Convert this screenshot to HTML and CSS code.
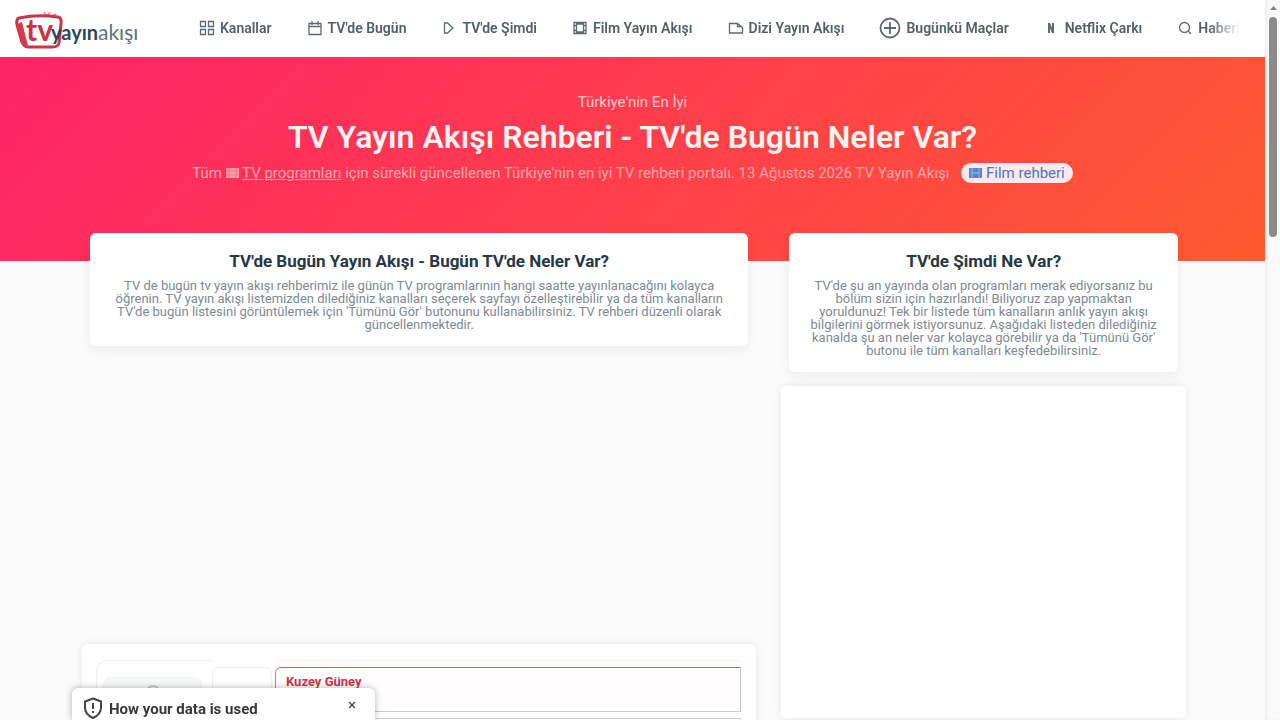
FILE: index.html
```html
<!DOCTYPE html>
<html lang="tr">
<head>
    <meta charset="utf-8">
    <title>TV Yayın Akışı Rehberi - TV'de Bugün Neler Var?</title>
    <link rel="stylesheet" href="styles.css">
</head>
<body>
    <div class="page">
        <header class="header">
            <a class="logo" href="#">
                <svg width="128" height="44" viewBox="0 0 128 44">
                    <path d="M32 9l4-6M34 9l8-4M33 8l-3-5" stroke="#e58a92" stroke-width="1.5" fill="none"/>
                    <path d="M5 9Q24 5 44 8Q48 9 47 15L45 34Q44 38 39 38H14Q10 38 8 33L3 16Q2 10 5 9Z" fill="#fff" stroke="#cc3345" stroke-width="3"/>
                    <path d="M3 15l5-2 6 24h-3q-4-1-5-6z" fill="#d93a4b"/>
                    <text x="12" y="32" class="logo-tv">tv</text>
                    <text x="37" y="31" class="logo-dark">yayın</text>
                    <text x="84" y="31" class="logo-gray">akışı</text>
                </svg>
            </a>
            <nav class="nav">
                <a href="#"><svg width="16" height="16" viewBox="0 0 16 16"><path d="M1.500 1.500h5v5h-5zM9.500 1.500h5v5h-5zM1.500 9.500h5v5h-5zM9.500 9.500h5v5h-5z"/></svg>Kanallar</a>
                <a href="#"><svg width="16" height="16" viewBox="0 0 16 16"><path d="M2 3.500h12v11H2zM2 6.500h12M5 1v4M11 1v4"/></svg>TV'de Bugün</a>
                <a href="#"><svg width="16" height="16" viewBox="0 0 16 16"><path d="M3.500 3v10h3l5.500-5-5.500-5z"/></svg>TV'de Şimdi</a>
                <a href="#"><svg width="16" height="16" viewBox="0 0 16 16"><path d="M2 2.500h12v11H2zM4.500 2.500v11M11.500 2.500v11M2 5.500h2.500M2 10.500h2.500M11.500 5.500H14M11.500 10.500H14M4.500 4h7M4.500 12h7"/></svg>Film Yayın Akışı</a>
                <a href="#"><svg width="16" height="16" viewBox="0 0 16 16"><path d="M1.500 3.500h8l5 4v5.500h-13zM9.500 3.500v3h4"/></svg>Dizi Yayın Akışı</a>
                <a href="#"><svg class="big" width="22" height="22" viewBox="0 0 22 22"><circle cx="11" cy="11" r="9.500"/><path d="M11 5v12M5 11h12"/></svg>Bugünkü Maçlar</a>
                <a href="#"><svg width="16" height="16" viewBox="0 0 16 16"><path class="thick" d="M5 3v10M5 3l4 10M9 3v10"/></svg>Netflix Çarkı</a>
                <a href="#"><svg width="16" height="16" viewBox="0 0 16 16"><circle cx="7.500" cy="7.500" r="5"/><path d="M11 11l3 3"/></svg>Haberler</a>
            </nav>
        </header>

        <section class="hero">
            <p class="hero-top">Türkiye'nin En İyi</p>
            <h1>TV Yayın Akışı Rehberi - TV'de Bugün Neler Var?</h1>
            <p class="hero-text">Tüm <svg width="13" height="12" viewBox="0 0 13 12"><path d="M0 1h13v10H0z" fill="#ff9da6"/><path d="M3 1v10M10 1v10M0 4h13M0 8h13" stroke="#ff7583"/></svg> <a href="#">TV programları</a> için sürekli güncellenen Türkiye'nin en iyi TV rehberi portalı. 13 Ağustos 2026 TV Yayın Akışı <a class="pill" href="#"><svg width="13" height="12" viewBox="0 0 13 12"><path d="M0 1h13v10H0z" fill="#5685d2"/><path d="M3 1v10M10 1v10M3 6h7" stroke="#9bb9e8"/></svg> Film rehberi</a></p>
        </section>

        <main class="columns">
            <div class="col-main">
                <div class="card">
                    <h2>TV'de Bugün Yayın Akışı - Bugün TV'de Neler Var?</h2>
                    <p>TV de bugün tv yayın akışı rehberimiz ile günün TV programlarının hangi saatte yayınlanacağını kolayca öğrenin. TV yayın akışı listemizden dilediğiniz kanalları seçerek sayfayı özelleştirebilir ya da tüm kanalların TV'de bugün listesini görüntülemek için 'Tümünü Gör' butonunu kullanabilirsiniz. TV rehberi düzenli olarak güncellenmektedir.</p>
                </div>
                <div class="ad-space"></div>
                <div class="panel schedule">
                    <div class="channel"><div class="channel-logo"><svg width="16" height="8" viewBox="0 0 16 8"><path d="M3 4q5-4 10 0" fill="none" stroke="#c9cdcf" stroke-width="2"/></svg></div></div>
                    <div class="time"></div>
                    <div class="programs">
                        <div class="program">Kuzey Güney</div>
                        <div class="program next"></div>
                    </div>
                </div>
            </div>
            <aside class="col-side">
                <div class="card">
                    <h2>TV'de Şimdi Ne Var?</h2>
                    <p>TV'de şu an yayında olan programları merak ediyorsanız bu bölüm sizin için hazırlandı! Biliyoruz zap yapmaktan yoruldunuz! Tek bir listede tüm kanalların anlık yayın akışı bilgilerini görmek istiyorsunuz. Aşağıdaki listeden dilediğiniz kanalda şu an neler var kolayca görebilir ya da 'Tümünü Gör' butonu ile tüm kanalları keşfedebilirsiniz.</p>
                </div>
                <div class="panel now"></div>
            </aside>
        </main>
    </div>

    <div class="scrollbar">
        <svg width="9" height="6" viewBox="0 0 9 6"><path d="M4.500 1L8 5H1z" fill="#858585"/></svg>
        <div class="thumb"></div>
    </div>

    <div class="consent">
        <svg width="20" height="22" viewBox="0 0 20 22"><path d="M10 1.500l8 3v6q0 7-8 10.500Q2 17.500 2 10.500v-6z" fill="none" stroke="#444" stroke-width="2"/><path d="M10 6v6M10 14v2" stroke="#444" stroke-width="2"/></svg>
        <strong>How your data is used</strong>
        <button type="button" aria-label="Close"><svg width="8" height="8" viewBox="0 0 8 8"><path d="M1 1l6 6M7 1L1 7" stroke="#444" stroke-width="1.300"/></svg></button>
    </div>
</body>
</html>
```
FILE: styles.css
```css
* { box-sizing: border-box; }
body { display: flex; height: 100vh; margin: 0; overflow: hidden; background: #fafafa; font-family: Roboto, sans-serif; color: #263843; }
h1, h2, p { margin: 0; }
.page { flex: 1; min-width: 0; height: 100vh; overflow: hidden; }

.header { display: flex; align-items: center; height: 57px; padding: 0 25px 1px 14px; background: #fff; }
.logo { flex: none; width: 185px; padding-top: 6px; }
.logo svg { display: block; }
.logo-tv { font: bold 30px Lato, sans-serif; fill: #c93445; }
.logo-dark { font: bold 20px Lato, sans-serif; fill: #29485a; }
.logo-gray { font: 21px Lato, sans-serif; fill: #65727b; }
.nav { display: flex; flex: 1; gap: 35px; min-width: 0; overflow: hidden; mask-image: linear-gradient(to right, #000 97%, transparent); }
.nav a { display: flex; flex: none; align-items: center; gap: 5px; font-size: 14px; font-weight: 600; color: #52606a; text-decoration: none; white-space: nowrap; }
.nav svg { fill: none; stroke: #5d6a73; stroke-width: 1.3; }
.nav .big { stroke-width: 1.8; }
.nav .thick { stroke-width: 2; }

.hero { height: 204px; padding-top: 34px; background: linear-gradient(135deg, #ff2268, #ff5a30); color: #fff; text-align: center; }
.hero-top { font-size: 15px; line-height: 22px; color: #ffc9cc; }
.hero h1 { font-size: 32px; font-weight: 600; line-height: 48px; color: #fff3ef; }
.hero-text { font-size: 15px; line-height: 24px; color: #ffa6ab; }
.hero-text a { color: inherit; }
.hero-text svg { vertical-align: -1px; }
.hero-text .pill { display: inline-block; margin-left: 8px; padding: 0 8px; border-radius: 10px; background: #fbe9ee; color: #4a76c0; line-height: 20px; text-decoration: none; }

.columns { display: flex; gap: 25px; align-items: flex-start; margin: -28px 79px 0 82px; }
.col-main { flex: 5; min-width: 0; }
.col-side { flex: 3; min-width: 0; }
.card { margin: 0 8px; padding: 16px 16px 15px; border-radius: 6px; background: #fff; box-shadow: 0 4px 12px rgba(0, 0, 0, .06); text-align: center; }
.card h2 { margin-bottom: 6px; font-size: 17px; line-height: 24px; }
.card p { font-size: 13px; line-height: 13px; color: #7d8a92; }
.panel { border-radius: 6px; background: #fff; box-shadow: 0 0 8px rgba(0, 0, 0, .08); }
.now { height: 332px; margin-top: 14px; }
.ad-space { height: 298px; }

.schedule { display: flex; height: 160px; padding: 16px 15px 0 14px; }
.channel { width: 116px; padding: 16px 10px 0 6px; border-top: 1px solid #eceeef; border-left: 1px solid #eceeef; border-radius: 12px 0 0 0; }
.channel-logo { height: 60px; padding-top: 6px; border: 1px solid #f0f2f2; border-radius: 8px; background: #f7f9f9; text-align: center; }
.channel-logo svg { display: block; margin: 0 auto; }
.time { width: 60px; margin: 7px 3px 0 0; border: 1px solid #f0f0f0; border-radius: 6px; }
.programs { flex: 1; padding-top: 6px; border-top: 1px solid #eee; }
.program { height: 45px; padding: 4px 10px; border: 1px solid #cfc7c8; border-top-color: #c65c65; border-left-color: #b9868b; border-radius: 6px 0 0 0; background: #fffdfd; font-size: 13px; font-weight: 700; line-height: 20px; color: #c9364a; }
.program.next { margin-top: 6px; border-radius: 0; border-color: #d5cdcd; }

.scrollbar { width: 15px; padding: 5px 3px 0 4px; background: #fafafa; box-shadow: inset 2px 0 3px #eee; }
.scrollbar svg { display: block; margin-bottom: 6px; }
.thumb { height: 220px; border-radius: 4px; background: #8b8b8b; }

.consent { position: fixed; bottom: 0; left: 72px; display: flex; gap: 6px; width: 303px; height: 32px; padding: 9px 18px 0 11px; border-radius: 6px 6px 0 0; background: #fff; box-shadow: 0 0 7px rgba(0, 0, 0, .3); }
.consent strong { flex: 1; font-size: 15px; line-height: 24px; color: #383838; }
.consent button { align-self: flex-start; padding: 4px 1px; border: 0; background: none; line-height: 0; }
```
